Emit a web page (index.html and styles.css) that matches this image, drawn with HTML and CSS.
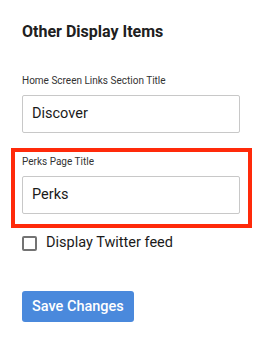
FILE: index.html
```html
<!DOCTYPE html>
<html>
<head>
<meta charset="utf-8">
<link rel="stylesheet" href="styles.css">
</head>
<body>
<div class="panel">
  <h2 class="title">Other Display Items</h2>
  <div class="field first">
    <label class="label">Home Screen Links Section Title</label>
    <div class="input">Discover</div>
  </div>
  <div class="field highlighted">
    <label class="label">Perks Page Title</label>
    <div class="input">Perks</div>
    <div class="highlight"></div>
  </div>
  <div class="check-row">
    <span class="checkbox"></span>
    <span class="check-label">Display Twitter feed</span>
  </div>
  <button class="save">Save Changes</button>
</div>
</body>
</html>
```
FILE: styles.css
```css
html, body {
  margin: 0;
  padding: 0;
  background: #ffffff;
}
body {
  font-family: Roboto, "Liberation Sans", sans-serif;
  color: #222;
}
.panel {
  padding: 22px 29px 0 22px;
  display: flex;
  flex-direction: column;
  align-items: flex-start;
}
.title {
  margin: 0;
  font-size: 16px;
  line-height: 20px;
  font-weight: 700;
  color: #202020;
}
.field {
  display: flex;
  flex-direction: column;
  width: 218px;
  position: relative;
}
.field.first {
  margin-top: 33px;
}
.field.highlighted {
  margin-top: 23px;
}
.label {
  font-size: 10px;
  line-height: 12px;
  color: #333;
  margin-bottom: 8px;
}
.input {
  box-sizing: border-box;
  height: 38px;
  border: 1px solid #c8c8c8;
  border-radius: 2px;
  padding: 0 9px;
  font-size: 14.5px;
  line-height: 36px;
  color: #1a1a1a;
}
.highlight {
  position: absolute;
  top: -8px;
  left: -11px;
  right: -12px;
  bottom: -14px;
  border: 4px solid #ff2a0a;
}
.check-row {
  margin-top: 21px;
  display: flex;
  align-items: center;
  gap: 9px;
}
.checkbox {
  box-sizing: border-box;
  width: 15px;
  height: 15px;
  border: 2px solid #737373;
  border-radius: 2px;
}
.check-label {
  font-size: 14.5px;
  line-height: 16px;
  color: #1a1a1a;
}
.save {
  margin-top: 40px;
  height: 31px;
  padding: 0 10px;
  border: none;
  border-radius: 3px;
  background: #4a89dc;
  color: #fff;
  font-family: Roboto, "Liberation Sans", sans-serif;
  font-size: 14.5px;
  font-weight: 500;
}
```
